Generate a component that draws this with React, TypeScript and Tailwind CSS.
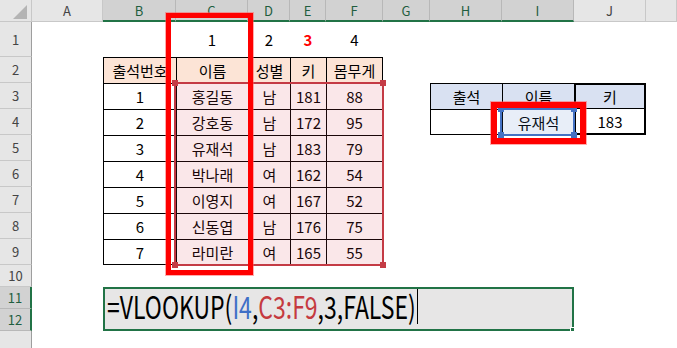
import { Fragment } from "react";

type Cell = { text?: string; cls?: string; textCls?: string };

const COLS = ["A", "B", "C", "D", "E", "F", "G", "H", "I", "J", ""];

const people = [
  ["1", "홍길동", "남", "181", "88"],
  ["2", "강호동", "남", "172", "95"],
  ["3", "유재석", "남", "183", "79"],
  ["4", "박나래", "여", "162", "54"],
  ["5", "이영지", "여", "167", "52"],
  ["6", "신동엽", "남", "176", "75"],
  ["7", "라미란", "여", "165", "55"],
];

const heads = ["출석번호", "이름", "성별", "키", "몸무게"];

// what sits in each cell; col 0 = A
function getCell(row: number, col: number): Cell {
  if (row === 1) {
    if (col === 2) return { text: "1" };
    if (col === 3) return { text: "2" };
    if (col === 4) return { text: "3", textCls: "text-[#ff0000] font-bold" };
    if (col === 5) return { text: "4" };
    return {};
  }

  if (row >= 2 && row <= 9 && col >= 1 && col <= 5) {
    let cls = "border-l border-t border-black";
    if (col === 5) cls += " border-r";
    if (row === 9) cls += " border-b";
    if (row === 2) return { text: heads[col - 1], cls: cls + " bg-[#fce4d6]" };
    return { text: people[row - 3][col - 1], cls };
  }

  // small lookup table
  if (row === 3) {
    if (col === 7) return { text: "출석", cls: "border-l border-t border-black bg-[#d9e1f2]" };
    if (col === 8) return { text: "이름", cls: "border-l border-t border-black bg-[#d9e1f2]" };
    if (col === 9)
      return { text: "키", cls: "border-l-2 border-r-2 border-t-2 border-b border-black bg-[#d9e1f2]" };
  }
  if (row === 4) {
    if (col === 7) return { cls: "border-l border-t border-b border-black" };
    if (col === 8) return { text: "유재석", cls: "border-l border-t border-b border-black" };
    if (col === 9) return { text: "183", cls: "border-l-2 border-r-2 border-b-2 border-black" };
  }
  return {};
}

function ColHeader({ label, selected }: { label: string; selected: boolean }) {
  return (
    <div
      className={
        selected
          ? "flex items-center justify-center bg-[#d2d2d2] border-r border-[#b8b8b8] border-b-2 border-b-[#217346] text-[13px] text-[#1f5e3f]"
          : "flex items-center justify-center bg-[#e6e6e6] border-r border-[#c8c8c8] border-b border-b-[#c8c8c8] text-[13px] text-[#444]"
      }
    >
      {label}
    </div>
  );
}

function RowHeader({ n, selected }: { n?: number; selected: boolean }) {
  return (
    <div
      className={
        selected
          ? "flex items-center justify-center bg-[#d2d2d2] border-b border-[#b8b8b8] border-r-2 border-r-[#217346] text-[13px] text-[#1f5e3f]"
          : "flex items-center justify-center bg-[#e6e6e6] border-b border-[#c8c8c8] border-r border-r-[#9e9e9e] text-[13px] text-[#444]"
      }
    >
      {n}
    </div>
  );
}

// coloured outline Excel draws round a referenced range, with its corner handles
function RangeMark({ cls, handle }: { cls: string; handle: string }) {
  return (
    <div className={"absolute border-2 " + cls}>
      <div className={"absolute -left-[4px] -top-[4px] w-[6px] h-[6px] " + handle} />
      <div className={"absolute -right-[4px] -top-[4px] w-[6px] h-[6px] " + handle} />
      <div className={"absolute -left-[4px] -bottom-[4px] w-[6px] h-[6px] " + handle} />
      <div className={"absolute -right-[4px] -bottom-[4px] w-[6px] h-[6px] " + handle} />
    </div>
  );
}

export default function App() {
  const rows = Array.from({ length: 13 }, (_, i) => i + 1);

  return (
    <div className="relative w-[677px] h-[348px] overflow-hidden bg-white font-['Noto_Sans_CJK_KR',sans-serif] leading-none">
      <div className="grid grid-cols-[32px_71px_73px_72px_42px_36px_57px_47px_72px_72px_72px_31px] grid-rows-[22px_35px_repeat(8,26px)_repeat(3,22px)_30px]">
        <div className="bg-[#e6e6e6] border-r border-b border-[#c8c8c8]">
          <svg width="31" height="21" viewBox="0 0 31 21">
            <polygon points="13,19 27,19 27,5" fill="#b4b4b4" />
          </svg>
        </div>
        {COLS.map((c, i) => (
          <ColHeader key={i} label={c} selected={i >= 1 && i <= 8} />
        ))}

        {rows.map((r) => (
          <Fragment key={r}>
            <RowHeader n={r < 13 ? r : undefined} selected={r === 11 || r === 12} />
            {COLS.map((_, ci) => {
              if ((r === 11 || r === 12) && ci >= 1 && ci <= 8) return null;
              const cell = getCell(r, ci);
              return (
                <div
                  key={ci}
                  className={"flex items-center justify-center text-[15px] text-black " + (cell.cls ?? "")}
                >
                  {cell.text && <span className={cell.textCls}>{cell.text}</span>}
                </div>
              );
            })}
          </Fragment>
        ))}

        {/* merged B11:I12 with the formula being typed */}
        <div className="relative col-start-3 col-end-11 row-start-12 row-end-14 flex items-center pl-[2px] pb-[6px] border-2 border-[#217346] bg-[#e7e6e6] text-black">
          <span className="inline-block text-[23px] scale-y-[1.35]">
            =VLOOKUP(<span className="text-[#3f6fc6]">I4</span>,<span className="text-[#c53a40]">C3:F9</span>,3,FALSE)
          </span>
          <span className="ml-[1px] w-px h-[35px] bg-black" />
          <div className="absolute -right-[3px] -bottom-[3px] w-[5px] h-[5px] bg-[#217346] border border-white" />
        </div>
      </div>

      <RangeMark
        cls="left-[174px] top-[82px] w-[210px] h-[184px] border-[#c43b45] bg-[rgba(214,60,70,0.12)]"
        handle="bg-[#c43b45]"
      />
      <RangeMark
        cls="left-[500px] top-[108px] w-[75px] h-[28px] border-[#4472c4] bg-[rgba(68,114,196,0.12)]"
        handle="bg-[#4472c4]"
      />

      {/* red callout boxes */}
      <div className="absolute left-[166px] top-[13px] w-[87px] h-[262px] border-[5px] border-[#ff0000] shadow-[0_0_0_1px_rgba(255,90,90,0.5)]" />
      <div className="absolute left-[491px] top-[102px] w-[95px] h-[42px] border-[6px] border-[#ff0000] shadow-[0_0_0_1px_rgba(255,90,90,0.5)]" />
    </div>
  );
}
